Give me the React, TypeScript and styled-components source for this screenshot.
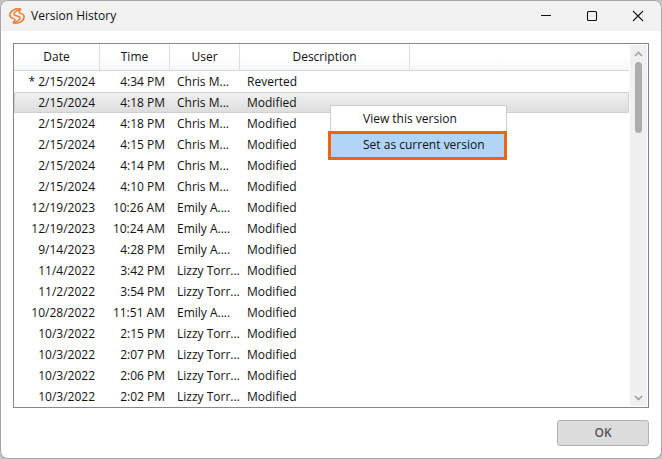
import React from "react";
import styled, { createGlobalStyle, css } from "styled-components";

const GlobalStyle = createGlobalStyle`
  * { box-sizing: border-box; }
  body {
    margin: 0;
    background: #c4c4c4;
    color: #111;
    font: 12px/16px "Open Sans", "Noto Sans", sans-serif;
  }
  button { font: inherit; color: inherit; }
`;

const Window = styled.main`
  min-height: 100vh;
  display: flex;
  flex-direction: column;
  background: #fff;
  border: 1px solid #a6a6a6;
  border-radius: 8px;
  overflow: hidden;
`;

const TitleBar = styled.header`
  display: flex;
  align-items: center;
  height: 30px;
  padding-left: 8px;
  gap: 6px;
  background: #f2f2f2;
`;

const Title = styled.h1`
  flex: 1;
  margin: 0;
  font-size: 12px;
  font-weight: 400;
`;

const CaptionButtons = styled.div`
  display: flex;
`;

const CaptionButton = styled.button`
  display: grid;
  place-items: center;
  width: 46px;
  height: 30px;
  padding: 0;
  border: 0;
  background: transparent;
`;

const Content = styled.section`
  flex: 1;
  display: flex;
  flex-direction: column;
  gap: 12px;
  padding: 12px;
`;

const ListBox = styled.div`
  position: relative;
  flex: 1;
  display: flex;
  border: 1px solid #828790;
`;

const Table = styled.table`
  flex: 1;
  align-self: flex-start;
  width: 100%;
  table-layout: fixed;
  border-collapse: separate;
  border-spacing: 0;
`;

const Column = styled.col<{ $width?: number }>`
  width: ${(p) => (p.$width ? `${p.$width}px` : "auto")};
`;

const HeadCell = styled.th`
  height: 27px;
  padding: 0;
  font-weight: 400;
  text-align: center;
  background: linear-gradient(#fff 40%, #f7f8fa);
  border-bottom: 1px solid #d5d5d5;
  border-right: 1px solid #dfdfe0;
  &:last-child { border-right: 0; }
`;

const Row = styled.tr<{ $selected?: boolean }>`
  ${(p) =>
    p.$selected &&
    css`
      background: linear-gradient(#f2f2f2, #dcdcdc);
      border-radius: 2px;
      box-shadow: inset 0 0 0 1px #cfcfcf;
    `}
`;

const Cell = styled.td<{ $right?: boolean }>`
  height: 21px;
  padding: 1px 5px 0 7px;
  white-space: nowrap;
  text-align: ${(p) => (p.$right ? "right" : "left")};
`;

const ScrollBar = styled.div`
  display: flex;
  flex-direction: column;
  align-items: center;
  width: 17px;
  margin: 1px;
  background: #f0f0f0;
`;

const ScrollButton = styled.button`
  display: grid;
  place-items: center;
  width: 17px;
  height: 17px;
  padding: 0;
  border: 0;
  background: transparent;
`;

const Track = styled.div`
  flex: 1;
`;

const Thumb = styled.div`
  width: 7px;
  height: 71px;
  border-radius: 4px;
  background: #adadad;
`;

const Menu = styled.div`
  position: absolute;
  left: 316px;
  top: 61px;
  width: 177px;
  background: #fff;
  border: 1px solid #ccc;
  border-bottom: 0;
`;

const MenuItem = styled.button<{ $active?: boolean }>`
  display: block;
  width: 100%;
  height: 25px;
  padding: 0 0 0 32px;
  border: 0;
  background: transparent;
  text-align: left;
  white-space: nowrap;
  ${(p) =>
    p.$active &&
    css`
      width: 179px;
      height: 29px;
      margin-left: -3px;
      padding-bottom: 2px;
      border: 3px solid #f7630c;
      background: #b0d5f8;
    `}
`;

const Footer = styled.footer`
  display: flex;
  justify-content: flex-end;
`;

const OkButton = styled.button`
  width: 92px;
  height: 26px;
  padding: 0;
  border: 1px solid #b2b2b2;
  border-radius: 3px;
  background: #dcdcdc;
  && { color: #555; font-weight: 600; }
`;

const widths = [86, 70, 70, 170, undefined];

const versions: [string, string, string, string][] = [
  ["* 2/15/2024", "4:34 PM", "Chris M...", "Reverted"],
  ["2/15/2024", "4:18 PM", "Chris M...", "Modified"],
  ["2/15/2024", "4:18 PM", "Chris M...", "Modified"],
  ["2/15/2024", "4:15 PM", "Chris M...", "Modified"],
  ["2/15/2024", "4:14 PM", "Chris M...", "Modified"],
  ["2/15/2024", "4:10 PM", "Chris M...", "Modified"],
  ["12/19/2023", "10:26 AM", "Emily A....", "Modified"],
  ["12/19/2023", "10:24 AM", "Emily A....", "Modified"],
  ["9/14/2023", "4:28 PM", "Emily A....", "Modified"],
  ["11/4/2022", "3:42 PM", "Lizzy Torr...", "Modified"],
  ["11/2/2022", "3:54 PM", "Lizzy Torr...", "Modified"],
  ["10/28/2022", "11:51 AM", "Emily A....", "Modified"],
  ["10/3/2022", "2:15 PM", "Lizzy Torr...", "Modified"],
  ["10/3/2022", "2:07 PM", "Lizzy Torr...", "Modified"],
  ["10/3/2022", "2:06 PM", "Lizzy Torr...", "Modified"],
  ["10/3/2022", "2:02 PM", "Lizzy Torr...", "Modified"],
];

const Logo = () => (
  <svg width="16" height="16" viewBox="0 0 16 16" fill="none" stroke="#ee7b35" strokeWidth="1.5" strokeLinecap="round" aria-hidden="true">
    <path d="M11.5 1.2C6-0.200 0.900 3 0.900 7.300C0.900 9.300 2.500 10 4.500 10.600C6.600 11.300 6.300 12.500 4.500 14" />
    <path d="M4.500 14.800C10 16.200 15.100 13 15.100 8.700C15.100 6.700 13.500 6 11.500 5.400C9.400 4.700 9.700 3.500 11.500 2" />
    <path d="M11.500 1.300C7 2.600 4.200 4.700 5 6.600C5.700 8.100 10.300 7.900 11 9.400C11.800 11.300 9 13.400 4.500 14.700" />
  </svg>
);

const Chevron = ({ d }: { d: string }) => (
  <svg width="9" height="6" viewBox="0 0 9 6" fill="none" stroke="#a0a0a0" strokeWidth="1.6" aria-hidden="true">
    <path d={d} />
  </svg>
);

const CaptionIcon = ({ children }: { children: React.ReactNode }) => (
  <svg width="12" height="12" viewBox="0 0 12 12" fill="none" stroke="#111" strokeWidth="1.1" aria-hidden="true">
    {children}
  </svg>
);

export default function App() {
  return (
    <>
      <GlobalStyle />
      <Window>
        <TitleBar>
          <Logo />
          <Title>Version History</Title>
          <CaptionButtons>
            <CaptionButton aria-label="Minimize">
              <CaptionIcon><path d="M1 5.500H11" /></CaptionIcon>
            </CaptionButton>
            <CaptionButton aria-label="Maximize">
              <CaptionIcon><rect x="1.500" y="1.500" width="9" height="9" rx="1" /></CaptionIcon>
            </CaptionButton>
            <CaptionButton aria-label="Close">
              <CaptionIcon><path d="M1 1L11 11M11 1L1 11" /></CaptionIcon>
            </CaptionButton>
          </CaptionButtons>
        </TitleBar>
        <Content>
          <ListBox>
            <Table>
              <colgroup>
                {widths.map((w, i) => <Column key={i} $width={w} />)}
              </colgroup>
              <thead>
                <tr>
                  {["Date", "Time", "User", "Description", ""].map((h) => (
                    <HeadCell key={h} scope="col">{h}</HeadCell>
                  ))}
                </tr>
              </thead>
              <tbody>
                {versions.map(([date, time, user, description], i) => (
                  <Row key={i} $selected={i === 1}>
                    <Cell $right>{date}</Cell>
                    <Cell $right>{time}</Cell>
                    <Cell>{user}</Cell>
                    <Cell>{description}</Cell>
                    <Cell />
                  </Row>
                ))}
              </tbody>
            </Table>
            <ScrollBar>
              <ScrollButton aria-label="Scroll up"><Chevron d="M1 5L4.500 1.500L8 5" /></ScrollButton>
              <Thumb />
              <Track />
              <ScrollButton aria-label="Scroll down"><Chevron d="M1 1L4.500 4.500L8 1" /></ScrollButton>
            </ScrollBar>
            <Menu role="menu">
              <MenuItem role="menuitem">View this version</MenuItem>
              <MenuItem role="menuitem" $active>Set as current version</MenuItem>
            </Menu>
          </ListBox>
          <Footer>
            <OkButton>OK</OkButton>
          </Footer>
        </Content>
      </Window>
    </>
  );
}
